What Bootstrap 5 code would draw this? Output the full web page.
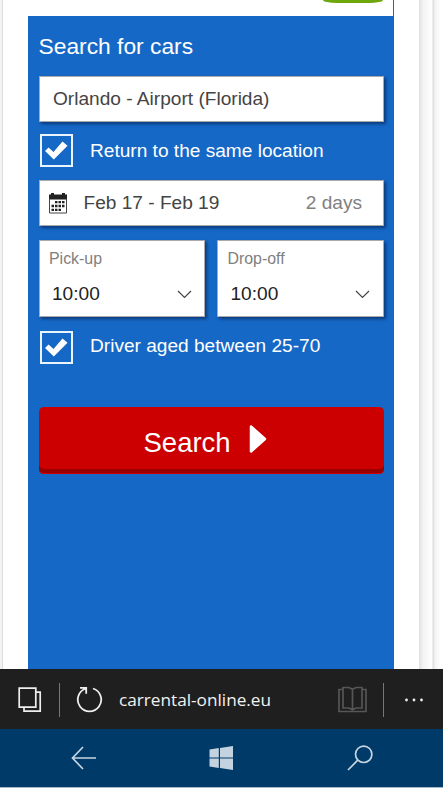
<!DOCTYPE html>
<html lang="en">
<head>
<meta charset="utf-8">
<meta name="viewport" content="width=device-width, initial-scale=1">
<title>Search for cars</title>
<link href="https://cdn.jsdelivr.net/npm/bootstrap@5.3.0/dist/css/bootstrap.min.css" rel="stylesheet">
<style>
body{font-family:"Liberation Sans",Arial,sans-serif;font-size:19.1px;line-height:24px;color:#444;background:#fff}
svg{display:block;flex:none}
.phone{width:443px;height:788px}
.page-area{height:669px;background:linear-gradient(90deg,#f3f3f3 0 2px,#dedede 2px 3px,#fff 3px 419px,#dfdfdf 419px,#f3f3f3 423px,#fdfdfd 431px,#fff 432px,#dcdcdc 433px,#f4f4f4 435px,#fff 441px)}
.sheet{width:366px;margin-left:28px}
.sheet-top{height:16px;border-right:1px solid #1668c6}
.pill{width:60px;height:3px;margin-right:10px;background:#6ea70b;border-radius:0 0 14px 14px/0 0 3px 3px}
.panel{background:#1668c6;padding:17px 10.5px 0 10.5px}
.panel h1{font-size:22.8px;line-height:27px;margin:0 0 16px}
.field{background:#fff;border:1px solid #aaa;box-shadow:2px 2px 3px rgba(0,20,60,.55);height:46px}
.place{padding-left:13.5px}
.opt{margin-top:12px}
.opt-age{margin-top:14px}
.opt-label{padding-top:5px}
.opt-age .opt-label{padding-top:3px}
.tick{width:33px;height:33px;border:2.5px solid #eaf4ff;margin-left:1.5px;margin-right:17px}
.dates{margin-top:13px;padding-left:8px;padding-right:20.5px}
.range{margin-left:16px}
.muted{color:#808080}
.times{margin-top:14px;gap:12px}
.time-box{height:77px;padding:6px 10.5px 0 9.5px}
.cap{font-size:15.9px;color:#808080}
.val{color:#222;padding-left:3px;padding-right:2px;margin-top:11px}
.btn-search{height:67px;margin-top:43px;border:0;border-radius:5px;background:#c00;box-shadow:inset 0 -1px 0 #c00,inset 0 -5px 0 #990000;color:#fff;font-size:27.5px;line-height:32px;padding:4px 0 0 105px}
.go{margin-left:18px;margin-bottom:7px}
.addr{height:59.5px;background:#1f1f1f;color:#f2f2f2;font-family:"Open Sans","Noto Sans",sans-serif;font-size:17.2px;padding:2px 19px 0 18px}
.rule{width:1px;height:34px;background:#777}
.rule-start{margin-left:17px}
.url{margin-left:15px}
.more{margin-left:20px}
.sysbar{height:59.5px;background:#003a69;border-bottom:1px solid #a3b8c8;padding:0 70px 0 71px}
.win{margin-right:2px}
</style>
</head>
<body class="overflow-hidden">
<div class="phone d-flex flex-column overflow-hidden">
  <main class="page-area d-flex flex-shrink-0">
    <div class="sheet d-flex flex-column">
      <div class="sheet-top d-flex justify-content-end"><div class="pill"></div></div>
      <form class="panel flex-grow-1">
        <h1 class="text-white fw-normal">Search for cars</h1>
        <div class="field place d-flex align-items-center">Orlando - Airport (Florida)</div>
        <div class="opt d-flex text-white">
          <div class="tick"><svg width="28" height="28" viewBox="0 0 28 28"><path d="M3 15 6.500 11.5 11.500 16 20.500 5.500 25.500 9.800 11.800 23.500Z" fill="#fff"/></svg></div>
          <div class="opt-label">Return to the same location</div>
        </div>
        <div class="field dates d-flex align-items-center">
          <svg width="20" height="21" viewBox="0 0 20 21"><path d="M1 1.500h2V0h3v1.500h8V0h3v1.500h2v5H1Z" fill="#222"/><path d="M1.500 5.500v14.500h17V5.500" fill="none" stroke="#444"/><path d="M7 9.200h9.500M3.500 13h13M3.500 16.800h9.500" stroke="#222" stroke-width="2.300" stroke-dasharray="2.500 1"/></svg>
          <span class="range">Feb 17 - Feb 19</span>
          <span class="muted ms-auto">2 days</span>
        </div>
        <div class="times d-flex">
          <div class="field time-box flex-fill">
            <div class="cap">Pick-up</div>
            <div class="val d-flex align-items-center justify-content-between">10:00<svg width="15" height="9" viewBox="0 0 15 9"><path d="M1 1 7.500 7.500 14 1" fill="none" stroke="#444" stroke-width="1.200"/></svg></div>
          </div>
          <div class="field time-box flex-fill">
            <div class="cap">Drop-off</div>
            <div class="val d-flex align-items-center justify-content-between">10:00<svg width="15" height="9" viewBox="0 0 15 9"><path d="M1 1 7.500 7.500 14 1" fill="none" stroke="#444" stroke-width="1.200"/></svg></div>
          </div>
        </div>
        <div class="opt-age d-flex text-white">
          <div class="tick"><svg width="28" height="28" viewBox="0 0 28 28"><path d="M3 15 6.500 11.5 11.500 16 20.500 5.500 25.500 9.800 11.800 23.500Z" fill="#fff"/></svg></div>
          <div class="opt-label">Driver aged between 25-70</div>
        </div>
        <button type="button" class="btn-search w-100 d-flex align-items-center">Search
          <svg class="go" width="18" height="30" viewBox="0 0 18 30"><path d="M2 2.500 16 15 2 27.500Z" fill="#fff" stroke="#fff" stroke-width="2.500" stroke-linejoin="round"/></svg>
        </button>
      </form>
    </div>
  </main>
  <nav class="addr d-flex align-items-center flex-shrink-0" aria-label="Address bar">
    <svg width="24" height="26" viewBox="0 0 24 26" fill="none" stroke="#eee" stroke-width="1.700"><path d="M1.200 1.200h16.600v19H1.200ZM18 5.200h4.200v19H6V20"/></svg>
    <div class="rule rule-start"></div>
    <svg class="ms-3" width="28" height="27" viewBox="0 0 28 27" fill="none" stroke="#eee" stroke-width="1.800"><path d="M17 2.500A11.700 11.700 0 1 1 10 2.500M4 1.800h6.200v6"/></svg>
    <span class="url">carrental-online.eu</span>
    <svg class="ms-auto" width="29" height="27" viewBox="0 0 29 27" fill="none" stroke="#565656" stroke-width="1.700"><path d="M5 3.500H1v22h27v-22h-4M5 1.500h6l3.500 1.700L18 1.500h6v20.500h-6l-3.500 1.700L11 22H5ZM14.500 3v21"/></svg>
    <div class="rule ms-3"></div>
    <svg class="more" width="20" height="4" viewBox="0 0 20 4" fill="#eee"><circle cx="2.500" cy="2" r="1.400"/><circle cx="10" cy="2" r="1.400"/><circle cx="17.500" cy="2" r="1.400"/></svg>
  </nav>
  <nav class="sysbar d-flex align-items-center justify-content-between flex-shrink-0" aria-label="System">
    <svg width="26" height="24" viewBox="0 0 26 24" fill="none" stroke="#c5d5e2" stroke-width="1.700"><path d="M25 12H1.500M12 1 1.500 12 12 23"/></svg>
    <svg class="win" width="25" height="24" viewBox="0 0 25 24" fill="#c3d2e0"><path d="M.5 3.500 9.800 2v9.400H.5ZM11 1.900 24 0v11.400H11ZM.5 12.500h9.300V22L.5 20.500ZM11 12.500h13V24l-13-1.900Z"/></svg>
    <svg width="26" height="26" viewBox="0 0 26 26" fill="none" stroke="#c5d5e2" stroke-width="1.700"><circle cx="16.700" cy="9.300" r="8.200"/><path d="M10.700 15.200 1 25"/></svg>
  </nav>
</div>
<script src="https://cdn.jsdelivr.net/npm/bootstrap@5.3.0/dist/js/bootstrap.bundle.min.js"></script>
</body>
</html>
